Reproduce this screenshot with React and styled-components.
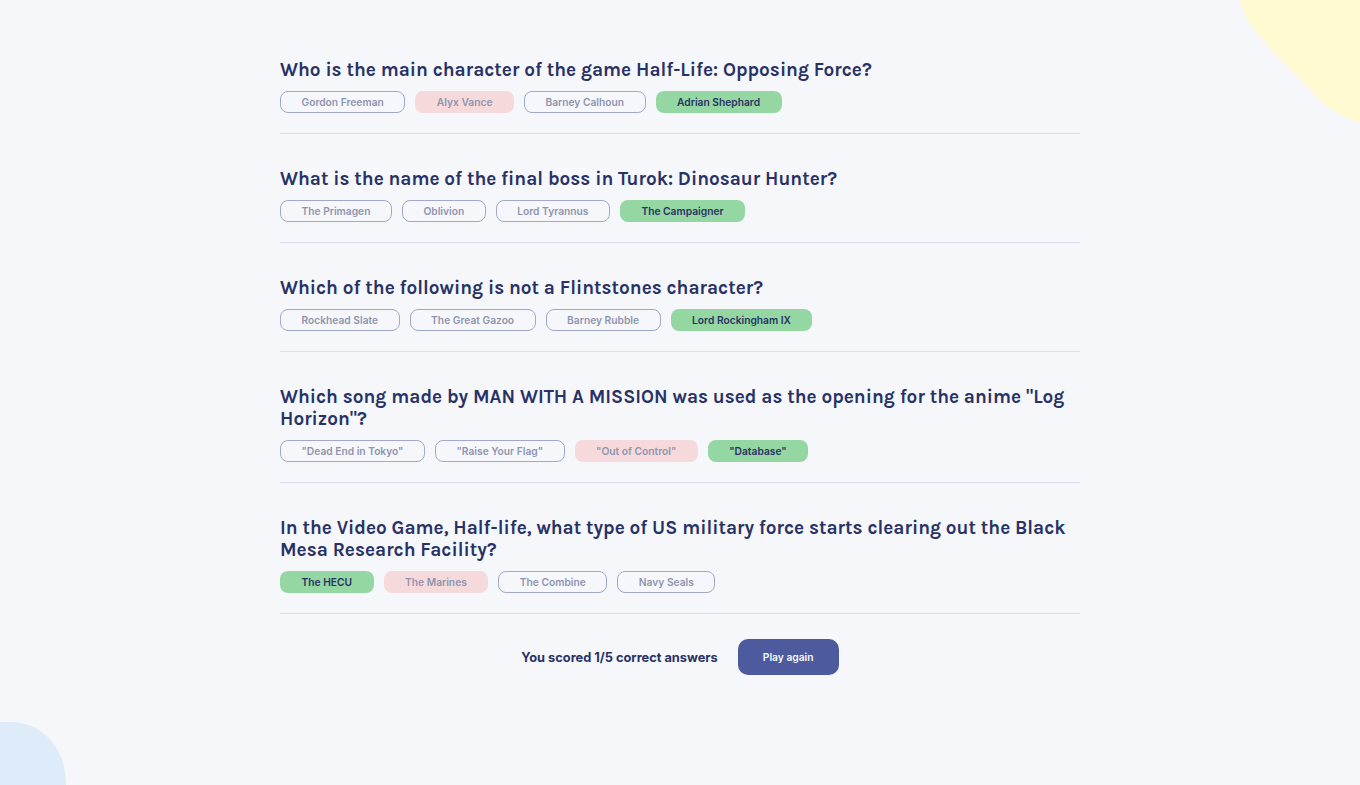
import React from "react";
import styled, { createGlobalStyle } from "styled-components";

const Global = createGlobalStyle`
  html, body { margin: 0; padding: 0; }
  body {
    background: #F5F7FB;
    font-family: "Inter", "Liberation Sans", sans-serif;
    color: #293264;
    min-height: 785px;
    overflow: hidden;
  }
`;

const Page = styled.div`
  position: relative;
  min-height: 785px;
  overflow: hidden;
`;

const BlobTop = styled.svg`
  position: absolute;
  top: 0;
  right: 0;
  width: 120px;
  height: 124px;
`;

const BlobBottom = styled.svg`
  position: absolute;
  left: 0;
  bottom: 0;
  width: 66px;
  height: 63px;
`;

const Container = styled.main`
  position: relative;
  width: 800px;
  margin: 0 auto;
  padding-top: 59px;
`;

const Question = styled.section`
  padding-bottom: 20px;
  border-bottom: 1px solid #DBDEF0;
  margin-bottom: 34px;
  &:last-of-type { margin-bottom: 25px; }
`;

const Title = styled.h2`
  margin: 0 0 10px;
  font-family: "Karla", "Lato", "Liberation Sans", sans-serif;
  font-weight: 700;
  font-size: 19px;
  line-height: 22px;
  color: #293264;
`;

const Answers = styled.div`
  display: flex;
  gap: 10px;
`;

const Answer = styled.button`
  box-sizing: border-box;
  height: 22px;
  padding: 0 20.5px;
  border-radius: 8px;
  font-family: "Inter", "Liberation Sans", sans-serif;
  font-size: 10.24px;
  font-weight: 600;
  color: #293264;
  display: flex;
  align-items: center;
  justify-content: center;
  border: 1px solid ${p => (p.$state === "none" ? "#4D5B9E" : "transparent")};
  background: ${p =>
    p.$state === "correct" ? "#94D7A2" : p.$state === "wrong" ? "#F8BCBC" : "transparent"};
  opacity: ${p => (p.$state === "correct" ? 1 : 0.5)};
`;

const Footer = styled.div`
  display: flex;
  align-items: center;
  justify-content: center;
  gap: 20px;
`;

const Score = styled.p`
  margin: 0;
  font-family: "Inter", "Liberation Sans", sans-serif;
  font-weight: 700;
  font-size: 12.8px;
  color: #293264;
`;

const PlayButton = styled.button`
  width: 101px;
  height: 36px;
  border: none;
  border-radius: 10px;
  background: #4D5B9E;
  color: #F5F7FB;
  font-family: "Inter", "Liberation Sans", sans-serif;
  font-weight: 600;
  font-size: 10.24px;
`;

const questions = [
  {
    q: "Who is the main character of the game Half-Life: Opposing Force?",
    a: [["Gordon Freeman", "none"], ["Alyx Vance", "wrong"], ["Barney Calhoun", "none"], ["Adrian Shephard", "correct"]],
  },
  {
    q: "What is the name of the final boss in Turok: Dinosaur Hunter?",
    a: [["The Primagen", "none"], ["Oblivion", "none"], ["Lord Tyrannus", "none"], ["The Campaigner", "correct"]],
  },
  {
    q: "Which of the following is not a Flintstones character?",
    a: [["Rockhead Slate", "none"], ["The Great Gazoo", "none"], ["Barney Rubble", "none"], ["Lord Rockingham IX", "correct"]],
  },
  {
    q: 'Which song made by MAN WITH A MISSION was used as the opening for the anime "Log Horizon"?',
    a: [['"Dead End in Tokyo"', "none"], ['"Raise Your Flag"', "none"], ['"Out of Control"', "wrong"], ['"Database"', "correct"]],
  },
  {
    q: "In the Video Game, Half-life, what type of US military force starts clearing out the Black Mesa Research Facility?",
    a: [["The HECU", "correct"], ["The Marines", "wrong"], ["The Combine", "none"], ["Navy Seals", "none"]],
  },
];

export default function App() {
  return (
    <Page>
      <Global />
      <BlobTop viewBox="0 0 120 124">
        <path d="M0 0 C4 18 14 32 30 48 L78 98 C92 112 106 119 120 122 L120 0 Z" fill="#FFFAD1" />
      </BlobTop>
      <BlobBottom viewBox="0 0 66 63">
        <path d="M0 0 L10 0 C42 0 66 26 66 63 L0 63 Z" fill="#DEEBF8" />
      </BlobBottom>
      <Container>
        {questions.map((item, i) => (
          <Question key={i}>
            <Title>{item.q}</Title>
            <Answers>
              {item.a.map(([text, state]) => (
                <Answer key={text} $state={state}>{text}</Answer>
              ))}
            </Answers>
          </Question>
        ))}
        <Footer>
          <Score>You scored 1/5 correct answers</Score>
          <PlayButton>Play again</PlayButton>
        </Footer>
      </Container>
    </Page>
  );
}
